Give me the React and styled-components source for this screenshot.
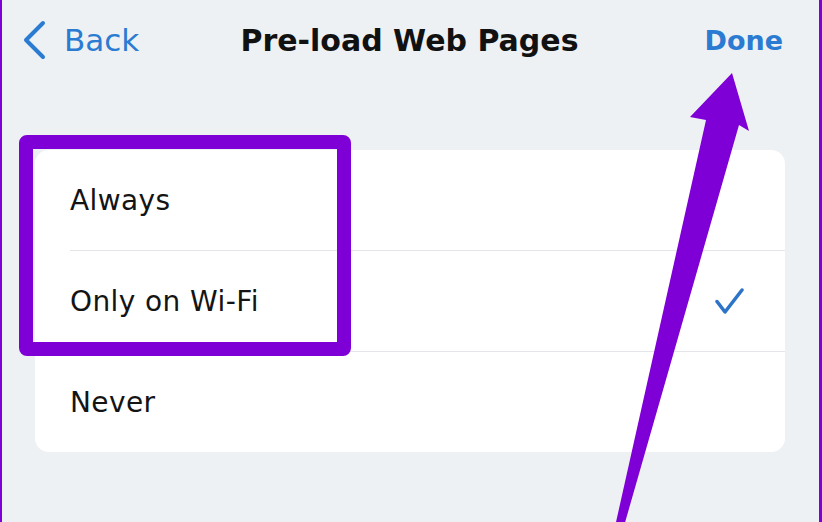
import React from "react"
import styled, { createGlobalStyle } from "styled-components"

const PURPLE = "#7e00d6"
const BLUE = "#2b7bd2"

const GlobalStyle = createGlobalStyle`
  html, body {
    margin: 0;
    padding: 0;
    background: #eef1f3;
  }
  body {
    font-family: "DejaVu Sans", "Liberation Sans", sans-serif;
  }
`

const options = [
  { label: "Always" },
  { label: "Only on Wi-Fi", checked: true },
  { label: "Never" },
]

export default function App() {
  return (
    <>
      <GlobalStyle />
      <Screen>
        <NavBar>
          <BackButton>
            <svg width="26" height="40" viewBox="0 0 26 40">
              <polyline
                points="21,3 4,20 21,37"
                fill="none"
                stroke={BLUE}
                strokeWidth="4"
                strokeLinecap="round"
                strokeLinejoin="round"
              />
            </svg>
            <span>Back</span>
          </BackButton>
          <Title>Pre-load Web Pages</Title>
          <DoneButton>Done</DoneButton>
        </NavBar>

        <Card>
          {options.map(opt => (
            <Row key={opt.label}>
              <Label>{opt.label}</Label>
              {opt.checked && (
                <svg width="30" height="28" viewBox="0 0 30 28">
                  <polyline
                    points="2,14.5 10,25 27,3"
                    fill="none"
                    stroke="#2d74c8"
                    strokeWidth="3.5"
                    strokeLinecap="round"
                    strokeLinejoin="round"
                  />
                </svg>
              )}
            </Row>
          ))}
        </Card>

        {/* annotation overlays */}
        <Highlight />
        <Arrow viewBox="0 0 822 522" width="822" height="522">
          <polygon
            points="612,540 706,120 690,117 732,73 749,131 739,125 620,540"
            fill={PURPLE}
          />
        </Arrow>
      </Screen>
    </>
  )
}

const Screen = styled.div`
  position: relative;
  width: 822px;
  height: 522px;
  box-sizing: border-box;
  border-left: 2px solid ${PURPLE};
  border-right: 3px solid ${PURPLE};
  background: #eef1f3;
  overflow: hidden;
`

const NavBar = styled.div`
  height: 80px;
  display: grid;
  grid-template-columns: 1fr auto 1fr;
  align-items: center;
  padding: 0 36px 0 20px;
`

const BackButton = styled.div`
  display: flex;
  align-items: center;
  gap: 16px;
  color: ${BLUE};
  font-size: 31px;
  justify-self: start;
  span {
    line-height: 1;
  }
`

const Title = styled.div`
  font-size: 30px;
  font-weight: bold;
  color: #111;
  margin-left: 14px;
`

const DoneButton = styled.div`
  justify-self: end;
  color: ${BLUE};
  font-size: 27px;
  font-weight: bold;
`

const Card = styled.div`
  margin: 70px 0 0 33px;
  width: 750px;
  background: #fff;
  border-radius: 14px;
  overflow: hidden;
`

const Row = styled.div`
  height: 100px;
  margin-left: 35px;
  padding-right: 40px;
  display: flex;
  align-items: center;
  justify-content: space-between;
  border-bottom: 1px solid #e3e5e8;
  &:last-child {
    border-bottom: none;
  }
`

const Label = styled.span`
  font-size: 28px;
  letter-spacing: 0.4px;
  color: #141414;
`

const Highlight = styled.div`
  position: absolute;
  left: 17px;
  top: 135px;
  width: 332px;
  height: 221px;
  box-sizing: border-box;
  border: 14px solid ${PURPLE};
  border-radius: 8px;
`

const Arrow = styled.svg`
  position: absolute;
  left: -2px;
  top: 0;
  pointer-events: none;
`
